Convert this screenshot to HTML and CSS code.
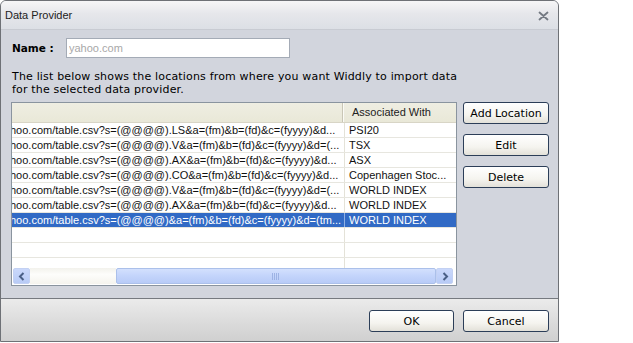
FILE: index.html
```html
<!DOCTYPE html>
<html lang="en">
  <head>
    <meta charset="utf-8">
    <title>Data Provider</title>
    <link rel="stylesheet" href="styles.css">
  </head>
  <body>
    <div class="dialog">
      <div class="titlebar">
        <span class="title">Data Provider</span>
        <svg class="close" width="11" height="10" viewBox="0 0 11 10">
          <path d="M1.5 1.5 L9.5 8.5 M9.5 1.5 L1.5 8.5" stroke="#737982" stroke-width="1.8" stroke-linecap="round"/>
        </svg>
      </div>

      <div class="content">
        <div class="name-row">
          <label class="name-label">Name :</label>
          <input class="name-input" type="text" placeholder="yahoo.com">
        </div>

        <p class="intro">The list below shows the locations from where you want Widdly to import data<br>for the selected data provider.</p>

        <div class="main">
          <div class="grid">
            <div class="grid-head">
              <div class="head-url"></div>
              <div class="head-assoc">Associated With</div>
            </div>
            <div class="grid-rows">
              <div class="row">
                <div class="col-url">hoo.com/table.csv?s=(@@@@).LS&amp;a=(fm)&amp;b=(fd)&amp;c=(fyyyy)&amp;d...</div>
                <div class="col-assoc">PSI20</div>
              </div>
              <div class="row">
                <div class="col-url">hoo.com/table.csv?s=(@@@@).V&amp;a=(fm)&amp;b=(fd)&amp;c=(fyyyy)&amp;d=(...</div>
                <div class="col-assoc">TSX</div>
              </div>
              <div class="row">
                <div class="col-url">hoo.com/table.csv?s=(@@@@).AX&amp;a=(fm)&amp;b=(fd)&amp;c=(fyyyy)&amp;d...</div>
                <div class="col-assoc">ASX</div>
              </div>
              <div class="row">
                <div class="col-url">hoo.com/table.csv?s=(@@@@).CO&amp;a=(fm)&amp;b=(fd)&amp;c=(fyyyy)&amp;d...</div>
                <div class="col-assoc">Copenhagen Stoc...</div>
              </div>
              <div class="row">
                <div class="col-url">hoo.com/table.csv?s=(@@@@).V&amp;a=(fm)&amp;b=(fd)&amp;c=(fyyyy)&amp;d=(...</div>
                <div class="col-assoc">WORLD INDEX</div>
              </div>
              <div class="row">
                <div class="col-url">hoo.com/table.csv?s=(@@@@).AX&amp;a=(fm)&amp;b=(fd)&amp;c=(fyyyy)&amp;d...</div>
                <div class="col-assoc">WORLD INDEX</div>
              </div>
              <div class="row selected">
                <div class="col-url">hoo.com/table.csv?s=(@@@@)&amp;a=(fm)&amp;b=(fd)&amp;c=(fyyyy)&amp;d=(tm...</div>
                <div class="col-assoc">WORLD INDEX</div>
              </div>
              <div class="row"><div class="col-url"></div><div class="col-assoc"></div></div>
              <div class="row"><div class="col-url"></div><div class="col-assoc"></div></div>
              <div class="row last"><div class="col-url"></div><div class="col-assoc"></div></div>
            </div>

            <div class="hscroll">
              <div class="sb-btn">
                <svg width="8" height="9" viewBox="0 0 8 9"><path d="M5.5 1 L2 4.5 L5.5 8" fill="none" stroke="#4a5f86" stroke-width="2"/></svg>
              </div>
              <div class="sb-track"></div>
              <div class="sb-thumb">
                <svg width="9" height="7" viewBox="0 0 9 7"><path d="M0.5 0 V7 M2.5 0 V7 M4.5 0 V7 M6.5 0 V7" stroke="#9db3e4" stroke-width="1"/></svg>
              </div>
              <div class="sb-btn">
                <svg width="8" height="9" viewBox="0 0 8 9"><path d="M2.5 1 L6 4.5 L2.5 8" fill="none" stroke="#4a5f86" stroke-width="2"/></svg>
              </div>
            </div>
          </div>

          <div class="side-buttons">
            <button class="btn">Add Location</button>
            <button class="btn">Edit</button>
            <button class="btn">Delete</button>
          </div>
        </div>
      </div>

      <div class="footer">
        <button class="btn btn-ok">OK</button>
        <button class="btn">Cancel</button>
      </div>
    </div>
  </body>
</html>
```

FILE: styles.css
```css
body {
  margin: 0;
  background: #fff;
  font-family: "Liberation Sans", Arial, sans-serif;
  font-size: 11px;
}
.dialog {
  width: 557px;
  height: 340px;
  border: 1px solid #6e7176;
  border-radius: 6px 6px 0 0;
  background: #d2d5dd;
  display: flex;
  flex-direction: column;
  overflow: hidden;
}
.titlebar {
  height: 28px;
  border-bottom: 1px solid #c8cbd2;
  background: linear-gradient(#f6f6f7, #e6e7eb 45%, #dcdfe5);
  display: flex;
  align-items: center;
  justify-content: space-between;
  padding: 0 9px 0 4px;
  color: #222;
}
.title {
  font-size: 11px;
}
.close {
  margin-top: 2px;
}
.content {
  flex: 1;
  padding: 8px 0 0 10px;
}
.name-row {
  display: flex;
  align-items: center;
  height: 20px;
}
.name-label {
  width: 55px;
  padding-left: 1px;
  box-sizing: border-box;
  font-family: "DejaVu Sans", Verdana, sans-serif;
  font-size: 10.5px;
  font-weight: bold;
}
.name-input {
  width: 224px;
  height: 20px;
  box-sizing: border-box;
  margin: 0;
  padding: 0 2px;
  border: 1px solid #a4abb6;
  background: #fff;
  font-family: "Liberation Sans", Arial, sans-serif;
  font-size: 11px;
}
.name-input::placeholder {
  color: #a8a8a8;
}
.intro {
  margin: 12px 0 6px 1px;
  font-family: "DejaVu Sans", Verdana, sans-serif;
  font-size: 11px;
  letter-spacing: 0.17px;
  line-height: 13px;
  color: #000;
}
.main {
  display: flex;
  gap: 6px;
}
.grid {
  width: 444px;
  height: 182px;
  border: 1px solid #8a949f;
  background: #fff;
  display: flex;
  flex-direction: column;
}
.grid-head {
  display: flex;
  height: 19px;
  border-bottom: 1px solid #d8d5c6;
  background: linear-gradient(#efeee2, #e9e8d8);
  line-height: 19px;
  color: #222;
}
.head-url {
  width: 330px;
  border-right: 1px solid #c9c6b6;
}
.head-assoc {
  flex: 1;
  padding-left: 8px;
  border-left: 1px solid #fbfbf6;
}
.grid-rows {
  flex: 1;
  overflow: hidden;
}
.row {
  display: flex;
  height: 14px;
  border-bottom: 1px solid #e7e6df;
  line-height: 14px;
  color: #111;
}
.row.last {
  border-bottom: none;
}
.col-url {
  width: 332px;
  border-right: 1px solid #e4e2d8;
  white-space: nowrap;
  overflow: hidden;
  text-overflow: ellipsis;
  text-indent: -2px;
}
.col-assoc {
  flex: 1;
  padding-left: 4px;
  white-space: nowrap;
  overflow: hidden;
}
.row.selected {
  background: #316ac5;
  color: #fff;
}
.row.selected .col-url {
  border-right-color: #8fb0e4;
}
.hscroll {
  display: flex;
  height: 16px;
  margin: 0 3px 1px 1px;
}
.sb-btn {
  width: 15px;
  height: 14px;
  border: 1px solid #c3d1f3;
  border-radius: 2px;
  background: linear-gradient(#cad8fb, #b8cbf6);
  display: flex;
  align-items: center;
  justify-content: center;
}
.sb-track {
  width: 86px;
  background: linear-gradient(#f3f2ec, #fdfdfb 40%, #f5f4ee);
}
.sb-thumb {
  flex: 1;
  border: 1px solid #abc0ea;
  border-radius: 2px;
  background: linear-gradient(#d3e0fd, #c3d4fb 50%, #b8cbf7);
  display: flex;
  align-items: center;
  justify-content: center;
}
.side-buttons {
  display: flex;
  flex-direction: column;
  gap: 10px;
}
.btn {
  width: 86px;
  height: 22px;
  margin: 0;
  padding: 0;
  border: 1px solid #2c3e58;
  border-radius: 3px;
  background: linear-gradient(#ffffff, #f5f4ef 60%, #e3e1d9);
  font-family: "DejaVu Sans", Verdana, sans-serif;
  font-size: 11px;
  color: #000;
}
.footer {
  height: 43px;
  border-top: 1px solid #767a80;
  background: linear-gradient(#ebebeb, #dadada 60%, #d0d0d0);
  display: flex;
  justify-content: flex-end;
  align-items: flex-start;
  gap: 9px;
  padding: 11px 9px 0 0;
  box-sizing: border-box;
}
.btn-ok {
  width: 85px;
}
```
